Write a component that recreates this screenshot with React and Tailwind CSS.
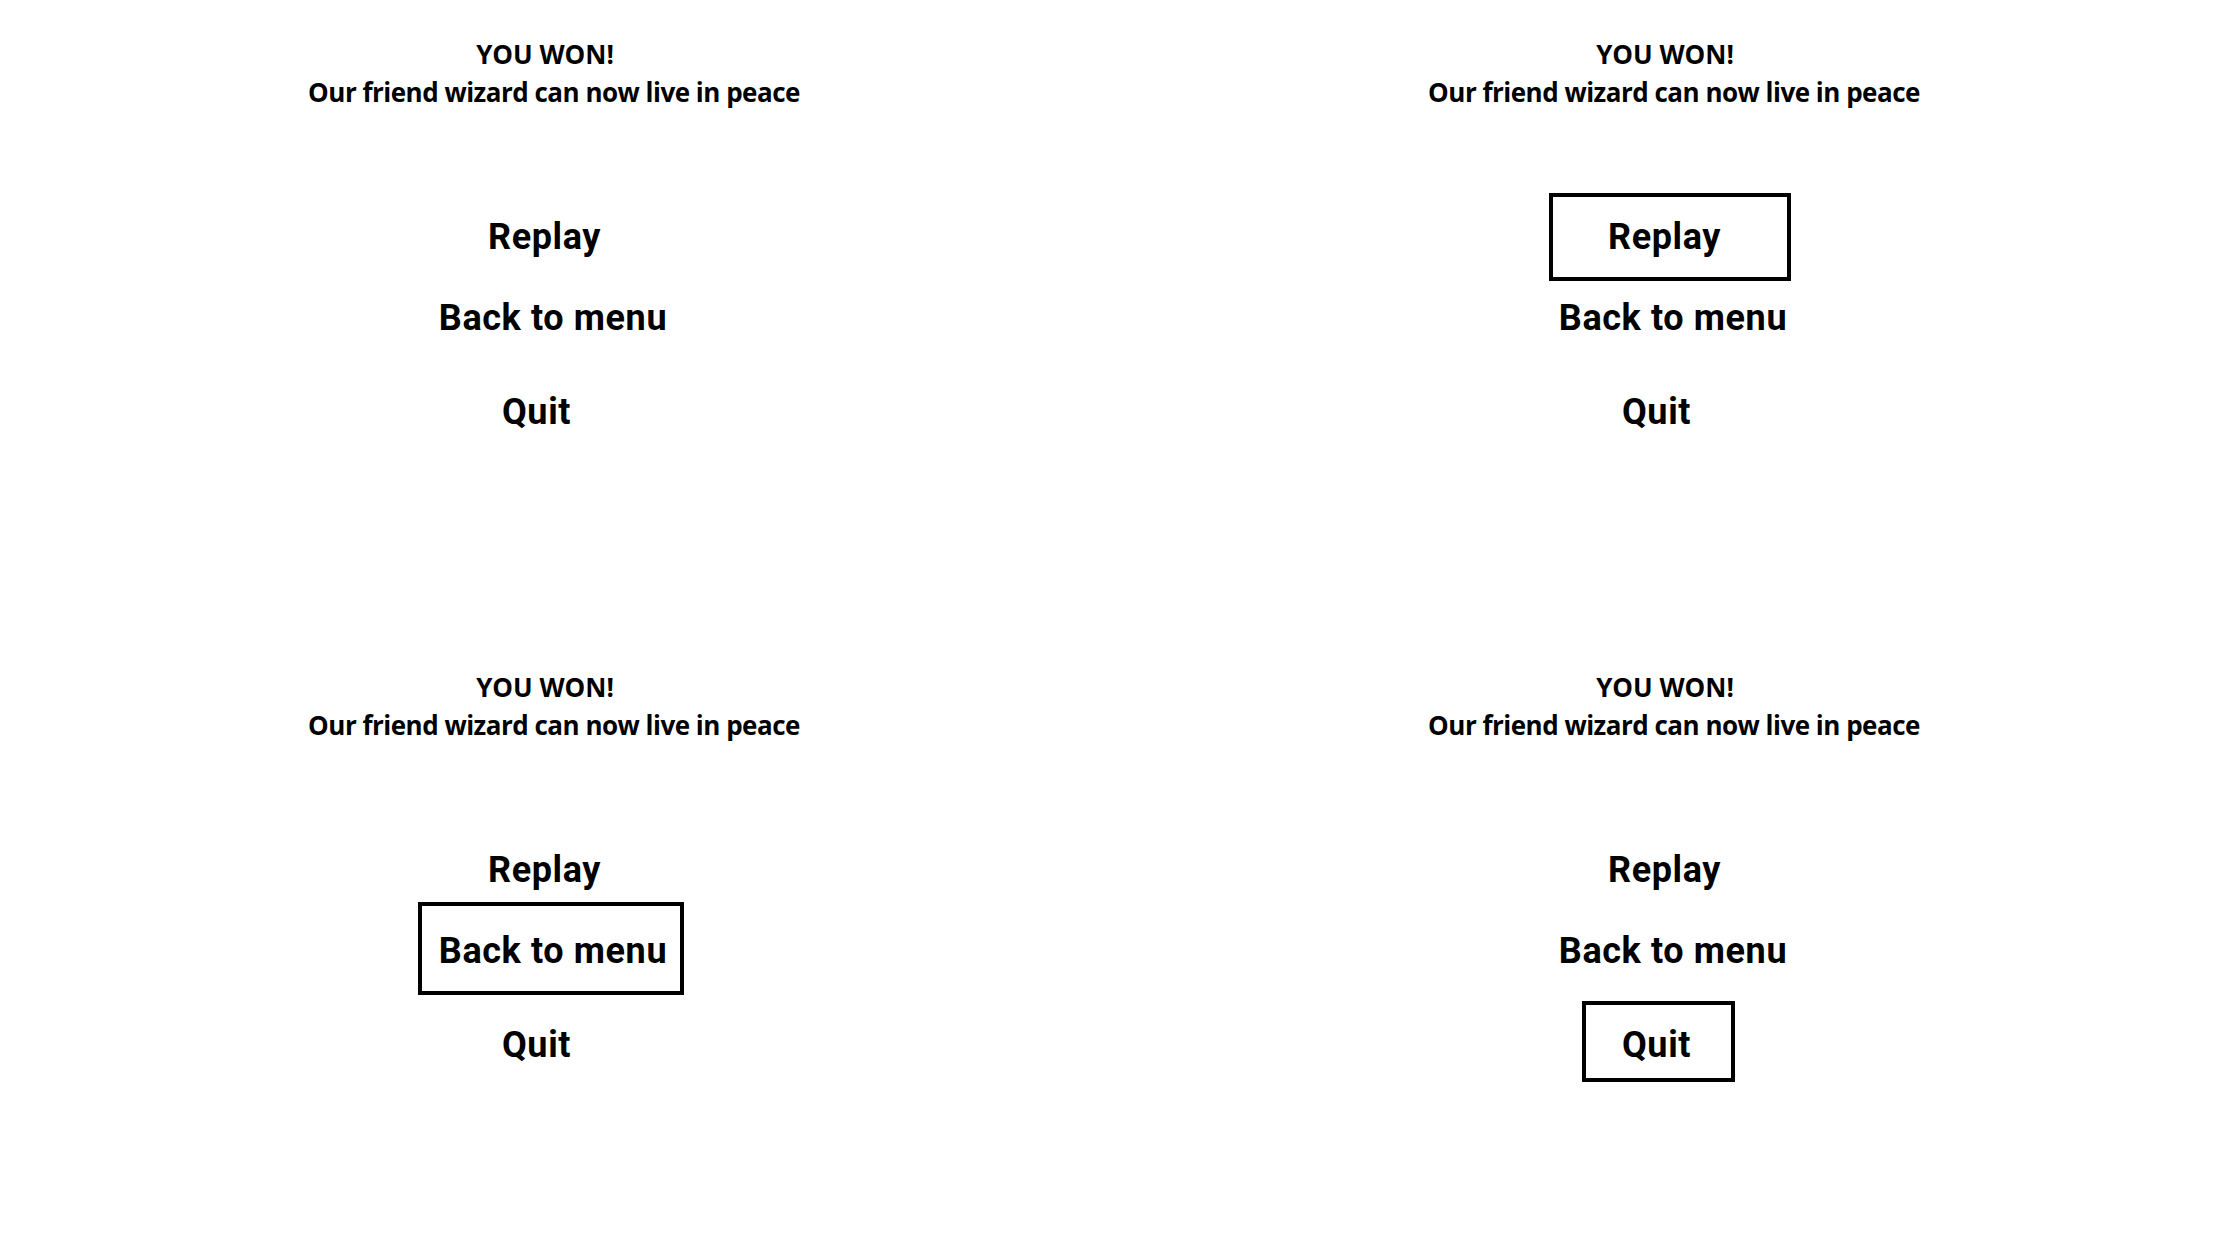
const items = [
  { label: 'Replay', box: 'ml-[429px] mt-[83px] w-[242px] h-[88px] pr-[11px]' },
  { label: 'Back to menu', box: 'ml-[418px] -mt-[12px] w-[266px] h-[93px] pt-[4px] pl-[4px]' },
  { label: 'Quit', box: 'ml-[462px] mt-[6px] w-[153px] h-[81px] pt-[6px] pr-[4px]' },
];

// one screenshot of the win screen; `selected` = index of the focused button
function WinScreen({ selected }) {
  return (
    <div className="flex flex-col">
      <div className="ml-[254px] w-[600px] pt-[37px] text-center font-['Open_Sans',sans-serif] font-bold text-[26px] leading-[35px] whitespace-nowrap text-black">
        <div className="-ml-[18px]">YOU WON!</div>
        <div className="mt-[3px] tracking-[-0.5px]">Our friend wizard can now live in peace</div>
      </div>
      {items.map((item, i) => (
        <div
          key={item.label}
          className={`${item.box} flex shrink-0 items-center justify-center border-4 ${
            i === selected ? 'border-black' : 'border-transparent'
          }`}
        >
          <span className="font-['Roboto',sans-serif] font-bold text-[36px] tracking-[0.6px] text-black">{item.label}</span>
        </div>
      ))}
    </div>
  );
}

export default function App() {
  return (
    <div className="w-[2240px] h-[1260px] bg-white grid grid-cols-[1120px_1fr] grid-rows-[633px_1fr] overflow-hidden">
      <WinScreen selected={-1} />
      <WinScreen selected={0} />
      <WinScreen selected={1} />
      <WinScreen selected={2} />
    </div>
  );
}
